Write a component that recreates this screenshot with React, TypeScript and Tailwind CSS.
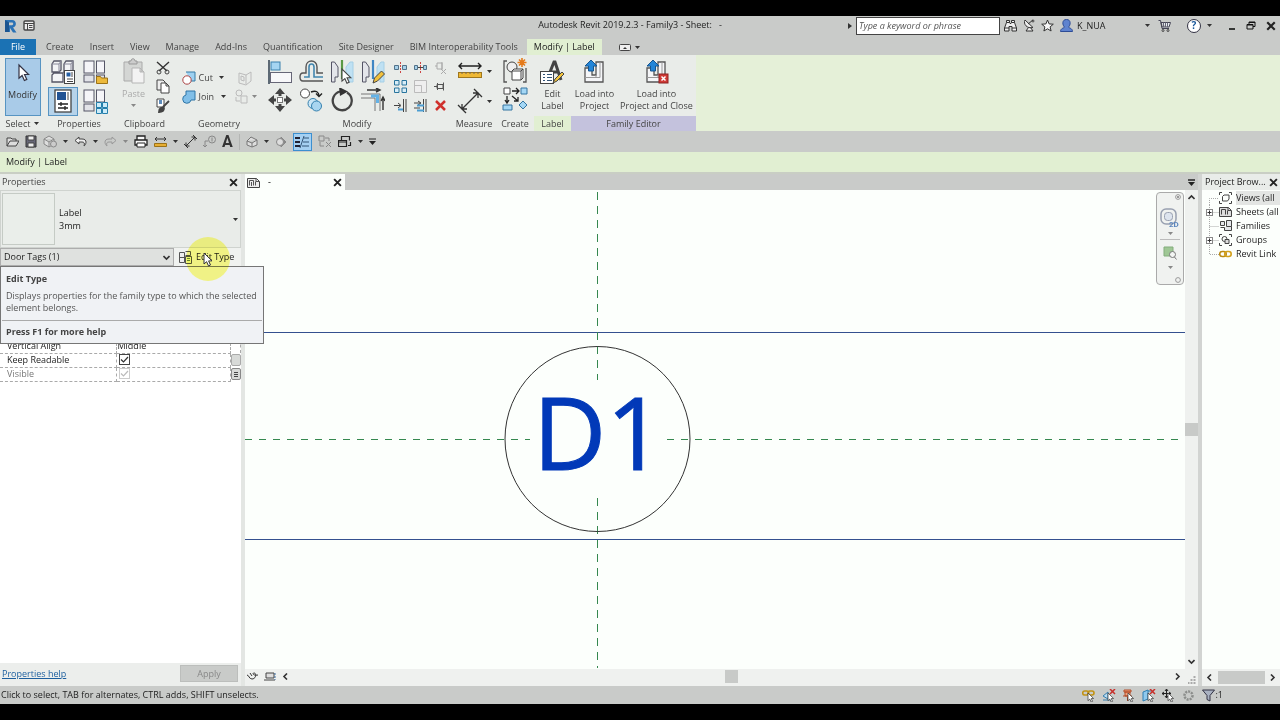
import React from 'react';

interface IconProps {
  w: number;
  h: number;
  children: React.ReactNode;
}

const Icon = ({ w, h, children }: IconProps) => (
  <svg width={w} height={h} viewBox={`0 0 ${w} ${h}`} fill="none" stroke="#444" strokeWidth={1} className="shrink-0" aria-hidden="true">
    {children}
  </svg>
);

const Caret = ({ muted }: { muted?: boolean }) => (
  <svg width={5} height={3} viewBox="0 0 5 3" className="shrink-0" aria-hidden="true">
    <path d="M0 0h5L2.5 3z" fill={muted ? '#888' : '#333'} />
  </svg>
);

/* Arrow pointer, reused by several icons */
const POINTER = 'M0 0v11l2.6-2.3 1.9 4.2 2-.9-1.9-4.1H8z';

const XMark = ({ size = 8 }: { size?: number }) => (
  <svg width={size} height={size} viewBox="0 0 8 8" aria-hidden="true">
    <path d="M1 1l6 6M7 1L1 7" stroke="#222" strokeWidth={1.7} />
  </svg>
);

const Chevron = ({ d }: { d: string }) => (
  <svg width={7} height={7} viewBox="0 0 7 7" fill="none" stroke="#333" strokeWidth={1.6} aria-hidden="true">
    <path d={d} />
  </svg>
);

const LEFT = 'M5 .5L2 3.500l3 3';
const RIGHT = 'M2 .5l3 3-3 3';
const UP = 'M.5 5l3-3 3 3';
const DOWN = 'M.5 2l3 3 3-3';

const IconButton = ({ label, className = '', children }: { label: string; className?: string; children: React.ReactNode }) => (
  <button type="button" aria-label={label} className={`flex items-center justify-center ${className}`}>
    {children}
  </button>
);

/* ---------- Title bar ---------- */

const TitleBar = () => (
  <header className="grid h-[23px] shrink-0 grid-cols-[1fr_auto_1fr] items-center bg-[#c9cbc9]">
    <div className="flex items-center gap-1.5 pb-1 pl-1">
      <Icon w={13} h={14}>
        <path d="M1 1h7c5 0 5 7 1 7.500l3.500 5H9L6 9v4H1z" fill="#2b72b5" stroke="none" />
        <path d="M5 3.500h3c1.600 0 1.600 2.700 0 2.700H5z" fill="#c9cbc9" stroke="none" />
        <path d="M1 1l4 2.500V13H1z" fill="#1a5490" stroke="none" />
      </Icon>
      <IconButton label="Home">
        <Icon w={12} h={11}>
          <rect x={1} y={1} width={10} height={9} rx={1} fill="#eee" strokeWidth={1.400} />
          <path d="M1 3.500h10M4.500 3.500v6.500M6 5.500h3.500M6 7.500h3.500" />
        </Icon>
      </IconButton>
    </div>
    <h1 className="whitespace-pre pb-1.5 pr-5 text-[9px] leading-4 text-[#222]">Autodesk Revit 2019.2.3 - Family3 - Sheet:   -</h1>
    <div className="flex items-center justify-end pb-1 pr-1">
      <svg width={4} height={6} viewBox="0 0 4 6" className="mr-1" aria-hidden="true"><path d="M0 0l4 3-4 3z" fill="#333" /></svg>
      <input
        type="text"
        aria-label="Search"
        placeholder="Type a keyword or phrase"
        className="mr-1 h-[18px] w-36 border border-[#444] bg-white px-0.5 text-[9px] italic placeholder:text-[#555]"
      />
      <div className="flex items-center gap-1.5">
        <IconButton label="Find">
          <Icon w={13} h={13}>
            <path d="M2.500 3.500V1.500h3v2l.5 1h1l.5-1v-2h3v2l2 5.500v3h-4.500V7.500h-3V12H.5V9z" fill="#eee" stroke="#333" />
            <path d="M.5 9H5M8 9h4.500M2.500 3.500h3M7.500 3.500h3" stroke="#333" />
          </Icon>
        </IconButton>
        <IconButton label="Communication Center">
          <Icon w={12} h={13}>
            <path d="M2 1c-2 4 2 9 8 7.500zM5 5l5-4M5.500 8.500L3 12h7l-2.500-3.500" fill="#eee" stroke="#333" />
            <circle cx={10} cy={2} r={1} />
          </Icon>
        </IconButton>
        <IconButton label="Favorites">
          <Icon w={13} h={13}>
            <path d="M6.500 1l1.600 3.900 4.200.3-3.200 2.700 1 4.100-3.600-2.200L2.900 12l1-4.100L.7 5.200l4.200-.3z" fill="#f6f6f6" stroke="#333" />
          </Icon>
        </IconButton>
        <IconButton label="Account">
          <Icon w={13} h={13}>
            <path d="M6.500.5c5 0 4 6 2 7.500 0 1 4 1 4 4.500H.5C.5 9 4.500 9 4.500 8c-2-1.500-3-7.500 2-7.500z" fill="#5f83cf" stroke="#2d4c96" />
          </Icon>
        </IconButton>
      </div>
      <span className="ml-1 w-[68px] text-[9px] text-[#222]">K_NUA</span>
      <Caret />
      <IconButton label="App Store" className="ml-2 mr-4">
        <Icon w={13} h={13}>
          <path d="M.5 1.500h2l1.500 8h7M3 3.500h9.500L11 8H4z" fill="#e8ecf2" stroke="#445" />
          <path d="M5.500 3.500V8M7.500 3.500V8M9.500 3.500V8" stroke="#667" />
          <circle cx={5} cy={11.500} r={1} /><circle cx={10} cy={11.500} r={1} />
        </Icon>
      </IconButton>
      <IconButton label="Help" className="mr-1.5 h-[14px] w-[14px] rounded-full border border-[#334] bg-white text-[10px] font-bold text-[#1c5a9c]">?</IconButton>
      <Caret />
      <div className="ml-4 flex items-center gap-2.5">
        <IconButton label="Minimize"><Icon w={8} h={8}><path d="M1 7h6" stroke="#111" strokeWidth={1.600} /></Icon></IconButton>
        <IconButton label="Restore"><Icon w={10} h={9}><path d="M3 3V1h6v4.500H7M1 3.500h6V8H1zM1 4h6M3 1.500h6" stroke="#111" /></Icon></IconButton>
        <IconButton label="Close"><XMark size={10} /></IconButton>
      </div>
    </div>
  </header>
);

/* ---------- Ribbon ---------- */

const TABS = ['Create', 'Insert', 'View', 'Manage', 'Add-Ins', 'Quantification', 'Site Designer', 'BIM Interoperability Tools'];

const RibbonTabs = () => (
  <nav className="flex h-4 shrink-0 items-stretch bg-[#c9cbc9] text-[9px] leading-4 text-[#444]">
    <button type="button" className="w-9 bg-[#1b72b4] text-white">File</button>
    <div className="flex gap-4 pl-[10px] pr-[9px]">
      {TABS.map((tab) => (
        <button key={tab} type="button" className="whitespace-nowrap">{tab}</button>
      ))}
    </div>
    <button type="button" className="w-[75px] whitespace-nowrap bg-[#e1efd2] text-[#222]">Modify | Label</button>
    <button type="button" aria-label="Minimize ribbon" className="ml-[17px] flex items-center gap-1">
      <Icon w={12} h={7}>
        <rect x={0.5} y={0.5} width={11} height={6} rx={1} fill="#eee" />
        <path d="M4 5l2-2 2 2z" fill="#333" stroke="none" />
      </Icon>
      <Caret />
    </button>
  </nav>
);

interface PanelProps {
  title: React.ReactNode;
  className: string;
  titleClass?: string;
  children: React.ReactNode;
}

const Panel = ({ title, className, titleClass = '', children }: PanelProps) => (
  <section className={`flex shrink-0 flex-col ${className}`}>
    <div className="flex h-[61px] justify-center pt-[3px]">{children}</div>
    <h2 className={`flex h-[15px] items-center justify-center gap-1 whitespace-nowrap ${titleClass}`}>{title}</h2>
  </section>
);

const TypeBoxes = () => (
  <>
    <rect x={1} y={1} width={10} height={12} fill="#f5f5f8" stroke="#556" />
    <rect x={13.500} y={1} width={8} height={12} fill="#f5f5f8" stroke="#556" />
    <rect x={1} y={15} width={10} height={7} fill="#e2e3e8" stroke="#556" />
    <rect x={13.500} y={15} width={8} height={7} fill="#e2e3e8" stroke="#556" />
  </>
);

const LoadIcon = ({ close }: { close?: boolean }) => (
  <Icon w={25} h={24}>
    <path d="M3 8h7v7h4V2h7v20H3z" fill="#f5f6f8" stroke="#555" strokeWidth={1.300} />
    <path d="M3 17.500h11V15M14 17.500h4V2" stroke="#999" />
    <path d="M9 0l6 6h-3.500v5h-5V6H3z" fill="#2285d8" stroke="#17558e" />
    {close && (
      <>
        <rect x={15} y={14} width={9} height={9} fill="#d03a36" stroke="#8d2020" />
        <path d="M17.500 16.500l4 4M21.500 16.500l-4 4" stroke="#fff" strokeWidth={1.500} />
      </>
    )}
  </Icon>
);

const MODIFY_TOOLS: [string, React.ReactNode][] = [
  ['Align', <><path d="M1 0v24" stroke="#234" strokeWidth={1.400} /><rect x={3} y={2} width={9} height={8} fill="#a5d5f2" stroke="#3b80ad" /><rect x={2.500} y={12.500} width={21} height={10} fill="#f7f7f9" stroke="#667" /></>],
  ['Offset', <><path d="M24 13h-6V7c0-8-11-8-11 0v6H4c-4 0-4 8 0 8h20" stroke="#555" strokeWidth={1.400} /><path d="M24 17h-9V7c0-4-5-4-5 0v10H5" stroke="#4286ae" strokeWidth={1.600} /></>],
  ['Mirror - Pick Axis', <><path d="M1.500 2h3l3.500 5v10H5v5H1.500z" fill="#e3e5ea" stroke="#556" /><path d="M12 0v19" stroke="#5a9a45" strokeWidth={2.200} /><path d="M23 2h-3l-4 5v10h3v5h4z" fill="#bfe1f3" stroke="#a5cfe6" /><path d={POINTER} transform="translate(12 9) scale(1.100)" fill="#fff" stroke="#444" /></>],
  ['Mirror - Draw Axis', <><path d="M1.500 2h3l3.500 5v10H5v5H1.500z" fill="#e3e5ea" stroke="#556" /><path d="M12 0v19" stroke="#3f86c4" strokeWidth={2.200} /><path d="M23 2h-3l-4 5v10h3v5h4z" fill="#bfe1f3" stroke="#a5cfe6" /><path d="M12 23l1.500-5 7-7 3 3-7 7z" fill="#f1c13c" stroke="#444" /></>],
  ['Move', <><path d="M12 4v16M4 12h16" stroke="#444" strokeWidth={3} /><path d="M12 0l5 6H7zM12 24l5-6H7zM0 12l6-5v10zM24 12l-6-5v10z" fill="#444" stroke="none" /><rect x={8.500} y={8.500} width={7} height={7} fill="#eee" stroke="#e9ece9" strokeWidth={1} /><rect x={9.500} y={9.500} width={5} height={5} fill="#fff" stroke="#777" /></>],
  ['Copy', <><circle cx={6} cy={5.500} r={4.500} fill="#fff" /><path d="M12 4c5-2 8 0 8 4M17 5.500l3 3 3-3" stroke="#222" strokeWidth={1.400} /><circle cx={14} cy={15.500} r={5} fill="#cbe6f6" stroke="#3581af" /><circle cx={17.500} cy={18} r={5} fill="#a9d5f0" stroke="#3581af" /></>],
  ['Rotate', <><path d="M10 3.500a9.500 9.500 0 1 0 7 1" stroke="#444" strokeWidth={2.300} /><path d="M9-1l9 4.500-8 4.500z" fill="#333" stroke="none" /></>],
  ['Trim/Extend to Corner', <><path d="M6 2h12M15 0l4 2-4 2M22 22v-11M20 13l2-4 2 4" stroke="#333" strokeWidth={1.400} /><path d="M0 6h19v17M0 10h14v13" stroke="#777" /><path d="M10 8h6.500v7" stroke="#64b2e6" strokeWidth={3} /></>],
];

const SMALL_TOOLS: [string, React.ReactNode][] = [
  ['Split Element', <><path d="M.5 4.500h4v4h-4zM8.500 4.500h4v4h-4z" fill="#a7d1ea" stroke="#52738a" /><path d="M6.500 1v11" stroke="#c44" strokeDasharray="2 1" /></>],
  ['Split with Gap', <><path d="M.5 4.500h3v4h-3zM9.500 4.500h3v4h-3z" fill="#a7d1ea" stroke="#52738a" /><path d="M6.500 1v11" stroke="#c44" strokeDasharray="2 1" /><path d="M4 6.500h5" /></>],
  ['Unpin', <><path d="M3 2h5v6H3zM1 5h2M8 1v8M7 8l5 5M12 8l-5 5" stroke="#aaa" /></>],
  ['Array', <><path d="M.5.5h4.500v4.500H.5zM8 .5h4.500v4.500H8zM.5 8h4.500v4.500H.5zM8 8h4.500v4.500H8z" fill="#d8edf7" stroke="#28749d" /></>],
  ['Scale', <><path d="M.5.5h12v12H.5zM.5 5.500h7v7" fill="#eee" stroke="#bbb" /></>],
  ['Pin', <><path d="M3 4.500h6v4H3zM0 6.500h3M9.500 2.500v8M3.500 3v7" stroke="#555" /></>],
  ['Trim Single', <><path d="M0 6.500h6M4 4l3 2.500L4 9M9.500 0v13M12 0v13" stroke="#444" /><path d="M4 10.500h5" stroke="#4b9dd2" strokeWidth={2} /></>],
  ['Trim Multiple', <><path d="M0 4h6M4 2l3 2-3 2M0 9h6M9.500 0v13M12 0v13" stroke="#444" /><path d="M3 6.500h7M3 11.500h7" stroke="#4b9dd2" strokeWidth={2} /></>],
  ['Delete', <><path d="M2 2l9 9M11 2l-9 9" stroke="#d0312d" strokeWidth={2.500} /></>],
];

const Ribbon = () => (
  <div className="flex h-[76px] shrink-0 bg-[#e5f0d8] text-[9px] text-[#444]">
    <div className="flex bg-[#e9ece9]">
      <Panel title={<>Select <Caret /></>} className="w-[45px]">
        <button type="button" className="flex h-[58px] w-9 flex-col items-center border border-[#5794c2] bg-[#a9cbe8] pt-1">
          <Icon w={14} h={20}><path d={POINTER} transform="translate(3 2) scale(1.200)" fill="#fff" stroke="#334" /></Icon>
          <span className="leading-6 text-[#333]">Modify</span>
        </button>
      </Panel>

      <Panel title="Properties" className="w-[68px]">
        <div className="grid grid-cols-2 gap-x-0.5">
          <IconButton label="Family Category" className="h-7 w-[30px]">
            <Icon w={25} h={25}>
              <path d="M1 4l2-3h7v9l-2 2H1zM13 4l2-3h7v9l-2 2h-7zM1 15l2-2h9v9H1z" fill="#f3f4f6" stroke="#556" strokeWidth={1.300} />
              <path d="M1 4h7v8M8 4l2-3M13 4h7v8M20 4l2-3" stroke="#889" />
              <rect x={13.500} y={10.500} width={10} height={13} fill="#fff" />
              <rect x={15.500} y={12.500} width={4} height={4} fill="#255ea3" stroke="none" />
              <path d="M16 19h6M16 21.500h6M21 12v5" />
            </Icon>
          </IconButton>
          <IconButton label="Family Types" className="h-7 w-[30px]">
            <Icon w={25} h={25}><TypeBoxes /><path d="M13.500 16.500h4l1 1.500h6v5.500h-11z" fill="#ecb93b" stroke="#9c7317" /></Icon>
          </IconButton>
          <IconButton label="Properties" className="h-[29px] w-[30px] border border-[#5794c2] bg-[#b6d3ea]">
            <Icon w={18} h={24}>
              <rect x={1} y={1} width={16} height={22} fill="#fff" strokeWidth={1.300} />
              <rect x={3} y={3} width={9} height={8} fill="#215293" stroke="none" /><path d="M14 3v8" />
              <path d="M4 15h10M4 19h10M7 13v4M11 17v4" stroke="#222" strokeWidth={1.300} />
            </Icon>
          </IconButton>
          <IconButton label="Type Properties" className="h-[29px] w-[30px]">
            <Icon w={25} h={25}>
              <TypeBoxes />
              <path d="M13.500 13.500h5v5h-5zM19.500 13.500h5v5h-5zM13.500 19.500h5v5h-5zM19.500 19.500h5v5h-5z" fill="#ccebf8" stroke="#247fac" />
            </Icon>
          </IconButton>
        </div>
      </Panel>

      <Panel title="Clipboard" className="w-[63px]">
        <div className="flex gap-2">
          <button type="button" className="flex w-7 flex-col items-center text-[#aaa]">
            <Icon w={22} h={26}>
              <path d="M1 4h18v19H1z" fill="#d4d6d4" stroke="#aaa" /><path d="M6 6V3h2c0-3 4-3 4 0h2v3z" fill="#ccc" stroke="#999" />
              <path d="M9 10h8l4 4v11H9zM17 10v4h4" fill="#f3f3f3" stroke="#b5b5b5" />
            </Icon>
            <span className="leading-5">Paste</span>
            <Caret muted />
          </button>
          <div className="flex flex-col gap-1 pt-0.5">
            <IconButton label="Cut to Clipboard"><Icon w={14} h={15}><path d="M1 2l10 9M13 2L3 11" stroke="#333" strokeWidth={1.400} /><circle cx={3} cy={12} r={2} /><circle cx={11} cy={12} r={2} /></Icon></IconButton>
            <IconButton label="Copy to Clipboard"><Icon w={14} h={15}><path d="M1 1h6l2 2v8H1z" fill="#eee" /><path d="M5 4h5l3 3v7H5zM10 4v3h3" fill="#fff" /></Icon></IconButton>
            <IconButton label="Match Type"><Icon w={14} h={15}><path d="M1 1h7v8H1z" fill="#fff" /><path d="M3 3h3M3 5h3" stroke="#2866a4" strokeWidth={1.500} /><path d="M13 3L7 9M3 14c0-4 3-5 5-4 0 3-2 4-5 4z" fill="#444" strokeWidth={1.800} /></Icon></IconButton>
          </div>
        </div>
      </Panel>

      <Panel title="Geometry" className="w-[86px]">
        <div className="grid grid-cols-[37px_15px_auto] content-center items-center gap-y-[3px]">
          <button type="button" className="flex items-center gap-[3px]">
            <Icon w={14} h={16}><path d="M4 2h9v9h-4" fill="#9dd0f0" stroke="#367ba5" /><circle cx={5} cy={10} r={4.200} fill="#fff" stroke="#a44" /></Icon>Cut
          </button>
          <span className="flex"><Caret /></span>
          <IconButton label="Wall Opening"><Icon w={14} h={16}><path d="M1 3l7 2 5-3v9l-5 4-7-2zM8 5v9M3 6l3 1v4l-3-1z" stroke="#bbb" /></Icon></IconButton>
          <button type="button" className="flex items-center gap-[3px]">
            <Icon w={14} h={16}><path d="M4 2h9v9H9a4.200 4.200 0 1 1-5-5z" fill="#81bfe8" stroke="#2f75a6" /></Icon>Join
          </button>
          <span className="flex pl-0.5"><Caret /></span>
          <span className="flex items-center gap-1">
            <Icon w={14} h={16}><circle cx={5} cy={4} r={3} stroke="#bbb" /><path d="M7 7h6v7H7zM2 8v4h4" stroke="#bbb" /></Icon><Caret muted />
          </span>
        </div>
      </Panel>

      <Panel title="Modify" className="w-[190px]">
        <div className="flex items-start gap-[9px]">
          <div className="grid grid-cols-4 gap-x-[7px] gap-y-1 pt-0.5">
            {MODIFY_TOOLS.map(([name, drawing]) => (
              <IconButton key={name} label={name}><Icon w={24} h={24}>{drawing}</Icon></IconButton>
            ))}
          </div>
          <div className="grid grid-cols-3 gap-x-[7px] gap-y-1.5 pt-[3px]">
            {SMALL_TOOLS.map(([name, drawing]) => (
              <IconButton key={name} label={name}><Icon w={13} h={13}>{drawing}</Icon></IconButton>
            ))}
          </div>
        </div>
      </Panel>

      <Panel title="Measure" className="w-[44px]">
        <div className="grid grid-cols-[27px_5px] content-start items-center gap-x-1 gap-y-1">
          <IconButton label="Measure"><Icon w={26} h={26}><path d="M2 8h22M5 5L2 8l3 3M21 5l3 3-3 3" stroke="#222" strokeWidth={1.400} /><rect x={1.500} y={14.500} width={23} height={5} fill="#efb834" stroke="#9f771d" /><path d="M5 14v2M9 14v2M13 14v2M17 14v2M21 14v2" stroke="#765" /></Icon></IconButton>
          <Caret />
          <IconButton label="Dimension"><Icon w={26} h={26}><path d="M5 21L21 5M16 5h5v5M10 21H5v-5M1 17l8 8M17 1l8 8" stroke="#333" strokeWidth={1.300} /></Icon></IconButton>
          <Caret />
        </div>
      </Panel>

      <Panel title="Create" className="w-[38px]">
        <div className="flex flex-col gap-0.5">
          <IconButton label="Create Group">
            <Icon w={26} h={26}>
              <path d="M5 3H2v21h3M21 24h3V10" stroke="#555" strokeWidth={1.300} /><circle cx={10} cy={9} r={5} fill="#eee" />
              <path d="M10 13l2-2h9v9l-2 2h-9zM10 13h9v9M19 13l2-2" fill="#fff" />
              <path d="M20 0v9M15.500 4.500h9M17 1.500l6 6M23 1.500l-6 6" stroke="#e57b1c" strokeWidth={1.600} />
            </Icon>
          </IconButton>
          <IconButton label="Create Similar">
            <Icon w={26} h={26}>
              <path d="M2 2h6v6H2z" fill="#fff" /><path d="M19 2h6v6h-6zM1 19h9v5H1z" fill="#a4d7f5" stroke="#3475a1" /><path d="M21 15l4 4-4 4-4-4z" fill="#a4d7f5" stroke="#3475a1" />
              <path d="M10 5h7M14 2l3 3-3 3M5 10v7M3 14l2 3 2-3M10 10l6 5M16 11v4h-4" stroke="#222" strokeWidth={1.300} />
            </Icon>
          </IconButton>
        </div>
      </Panel>

      <Panel title="Label" className="w-[37px]" titleClass="bg-[#e1efd2]">
        <button type="button" className="flex flex-col items-center pt-0.5 leading-3">
          <Icon w={25} h={25}>
            <path d="M8 17L14 2h1l6 18M12 12h6" stroke="#444" strokeWidth={3} /><rect x={0.500} y={11.500} width={13} height={12} fill="#fff" />
            <path d="M3 14.500h2M7 14.500h5M3 17.500h2M7 17.500h5M3 20.500h2M7 20.500h5" stroke="#357" /><path d="M13 23l2-4 7-7 2 2-7 7z" fill="#f2c43c" />
          </Icon>
          <span className="mt-[3px]">Edit<br />Label</span>
        </button>
      </Panel>

      <Panel title="Family Editor" className="w-[125px]" titleClass="bg-[#c4c2dd]">
        <div className="flex pt-0.5 leading-3">
          <button type="button" className="flex w-[46px] flex-col items-center"><LoadIcon /><span className="mt-1 whitespace-nowrap">Load into<br />Project</span></button>
          <button type="button" className="flex w-[78px] flex-col items-center"><LoadIcon close /><span className="mt-1 whitespace-nowrap">Load into<br />Project and Close</span></button>
        </div>
      </Panel>
    </div>
  </div>
);

/* ---------- Quick access toolbar ---------- */

const QuickAccess = () => (
  <div className="flex h-[21px] shrink-0 items-center gap-1.5 bg-[#c9cbc9] pl-1.5">
    <IconButton label="Open"><Icon w={13} h={13}><path d="M1 11V3h4l1 1h4v2M1 11l3-5h9l-3 5z" fill="#ddd" /></Icon></IconButton>
    <IconButton label="Save"><Icon w={12} h={13}><path d="M1 1h10v11H1z" fill="#667" stroke="#333" /><path d="M3 1h6v4H3zM3 8h6v4H3z" fill="#eee" /></Icon></IconButton>
    <IconButton label="Synchronize"><Icon w={14} h={13}><path d="M1 4l5-3 5 3v5l-5 3-5-3zM1 4l5 3 5-3M6 7v5" fill="#ddd" stroke="#888" /><circle cx={10.500} cy={9} r={3} fill="#ccc" stroke="#888" /></Icon></IconButton>
    <Caret />
    <IconButton label="Undo"><Icon w={13} h={11}><path d="M1 4.500L5 1v2h3c6 0 4 6 2 7 1-3 0-4-2-4H5v2z" fill="#eee" /></Icon></IconButton>
    <Caret />
    <IconButton label="Redo"><Icon w={13} h={11}><path d="M12 4.500L8 1v2H5c-6 0-4 6-2 7-1-3 0-4 2-4h3v2z" stroke="#999" /></Icon></IconButton>
    <Caret muted />
    <IconButton label="Print"><Icon w={14} h={13}><path d="M3 5V1h8v4M1 5h12v5H1z" fill="#f7f7f7" stroke="#222" strokeWidth={1.300} /><path d="M3 8h8v4H3z" fill="#fff" stroke="#222" /></Icon></IconButton>
    <IconButton label="Measure"><Icon w={13} h={12}><path d="M1 3h11M3 1L1 3l2 2M10 1l2 2-2 2" stroke="#333" /><path d="M.5 7.500h12v3H.5z" fill="#e7ae32" stroke="#9b7217" /></Icon></IconButton>
    <Caret />
    <IconButton label="Aligned Dimension"><Icon w={13} h={13}><path d="M2 11l9-9M7.500 2H11v3.500M5.500 11H2V7.500M0 9l4 4M9 0l4 4" stroke="#333" /></Icon></IconButton>
    <IconButton label="Tag"><Icon w={13} h={13}><circle cx={9} cy={4.500} r={3.500} stroke="#888" /><path d="M9 2.500v4M5 6H2v6M0 10l2 2 2-2" stroke="#888" /></Icon></IconButton>
    <button type="button" aria-label="Text" className="font-[Roboto] text-base font-bold leading-4 text-[#333]">A</button>
    <span className="h-4 w-px bg-[#b4b6b4]" />
    <IconButton label="3D View"><Icon w={12} h={12}><path d="M1 5l4-4 6 3v5l-5 2-5-2zM1 5l5 2 5-3M6 7v4" fill="#ddd" stroke="#777" /></Icon></IconButton>
    <Caret />
    <IconButton label="Section"><Icon w={12} h={12}><path d="M6 1l5 5-5 5z" fill="#888" stroke="#888" /><circle cx={5} cy={6} r={3.500} fill="#ddd" stroke="#888" /></Icon></IconButton>
    <IconButton label="Thin Lines" className="h-[18px] w-[19px] border border-[#3c8fd0] bg-[#a5d0f2]"><Icon w={14} h={12}><path d="M0 2h5M0 6h5M0 10h5" stroke="#223" strokeWidth={2} /><path d="M9 2h5M8 6h6M7 10h7M9 0L5 12" stroke="#357" /></Icon></IconButton>
    <IconButton label="Close Hidden Windows"><Icon w={14} h={13}><path d="M1 1h5v5H1zM7 3h4v3M2 7v4h4M8 7l5 5M13 7l-5 5" stroke="#888" /></Icon></IconButton>
    <IconButton label="Switch Windows"><Icon w={14} h={12}><path d="M3.500 4V.5h8v4M.5 4.500h8v6h-8zM.5 6h8M10 9.500h2.500V6" stroke="#222" strokeWidth={1.200} /></Icon></IconButton>
    <Caret />
    <IconButton label="Customize Toolbar"><Icon w={7} h={7}><path d="M0 1h7" stroke="#222" /><path d="M0 3h7L3.500 7z" fill="#222" stroke="none" /></Icon></IconButton>
  </div>
);

/* ---------- Properties palette ---------- */

const Tooltip = () => (
  <div role="tooltip" className="absolute left-0 top-[92px] z-10 h-[78px] w-[264px] whitespace-nowrap border border-[#767676] bg-[#f0f2f5] text-[9px] leading-3 text-[#555]">
    <h3 className="px-[5px] pt-1.5 font-bold text-[#444]">Edit Type</h3>
    <p className="px-[5px] pt-[5px]">Displays properties for the family type to which the selected<br />element belongs.</p>
    <p className="mx-px mt-1.5 border-t border-[#aaa] px-1 pt-[5px] font-bold text-[#444]">Press F1 for more help</p>
  </div>
);

const cellLine = 'border-b border-r border-dashed border-[#aaa]';

const PropertiesPalette = () => (
  <aside className="relative flex w-[245px] shrink-0 flex-col border-r-4 border-[#e3e6e3] bg-white text-[9px] text-[#222]">
    <div className="flex h-4 shrink-0 items-center justify-between bg-[#e9ece9] pl-0.5 pr-[3px] text-[#444]">
      <h2>Properties</h2>
      <IconButton label="Close Properties"><XMark size={9} /></IconButton>
    </div>
    <button type="button" aria-label="Type selector: Label 3mm" className="flex h-[58px] shrink-0 items-center border border-[#cfd3cf] bg-[#e9ece9] pl-px pr-0.5 text-left leading-[13px]">
      <span className="mr-1 h-[52px] w-[53px] border border-[#c5cbc5] bg-[#eaeeea]" />
      <span className="flex-1">Label<br />3mm</span>
      <Caret />
    </button>
    <div className="flex h-[18px] shrink-0 items-center bg-[#f0f2f0]">
      <div className="relative flex h-full w-[174px] items-center">
        <select aria-label="Filter" className="h-full w-full appearance-none border border-[#adadad] bg-[#dfe1df] pl-[3px] text-[9px]">
          <option>Door Tags (1)</option>
        </select>
        <span className="pointer-events-none absolute right-1"><Chevron d={DOWN} /></span>
      </div>
      <button type="button" className="flex items-center gap-1 whitespace-nowrap pl-[5px]">
        <Icon w={13} h={13}>
          <path d="M.5 1.500h5v10h-5zM.5 6.500h5M6.500.5h5v4h-5" fill="#eee" stroke="#555" />
          <path d="M6.500 5.500h6v7h-6z" fill="#eef4c0" stroke="#555" /><path d="M8 7.500h3M8 9.500h3" stroke="#684" />
        </Icon>
        Edit Type
      </button>
    </div>
    <div className="flex-1 pt-[73px]">
      <table className="w-full table-fixed border-collapse leading-3">
        <colgroup><col className="w-[116px]" /><col /><col className="w-[10px]" /></colgroup>
        <tbody>
          <tr className="h-[14px]">
            <th className={`${cellLine} pl-[7px] text-left font-normal`}>Vertical Align</th>
            <td className={`${cellLine} pl-px`}>Middle</td>
            <td className="border-r border-dashed border-[#aaa]" />
          </tr>
          <tr className="h-[14px]">
            <th className={`${cellLine} pl-[7px] text-left font-normal`}><label htmlFor="keep">Keep Readable</label></th>
            <td className={`${cellLine} pl-0.5`}>
              <span className="relative flex h-3">
                <input id="keep" type="checkbox" defaultChecked className="h-[11px] w-[11px] appearance-none border border-[#444] bg-white" />
                <svg width={11} height={11} viewBox="0 0 11 11" className="pointer-events-none absolute left-0 top-0" aria-hidden="true"><path d="M2 5.500L4.500 8 9 3" fill="none" stroke="#333" strokeWidth={1.200} /></svg>
              </span>
            </td>
            <td className="p-0"><span className="block h-3 rounded-xs border border-[#aaa] bg-[#d8dad8]" /></td>
          </tr>
          <tr className="h-[14px]">
            <th className={`${cellLine} pl-[7px] text-left font-normal text-[#777]`}><label htmlFor="visible">Visible</label></th>
            <td className={`${cellLine} pl-0.5`}>
              <span className="relative flex h-3">
                <input id="visible" type="checkbox" defaultChecked disabled className="h-[11px] w-[11px] appearance-none border border-[#ccc] bg-white" />
                <svg width={11} height={11} viewBox="0 0 11 11" className="pointer-events-none absolute left-0 top-0" aria-hidden="true"><path d="M2 5.500L4.500 8 9 3" fill="none" stroke="#bbb" strokeWidth={1.200} /></svg>
              </span>
            </td>
            <td className="p-0">
              <span className="flex h-3 flex-col items-center justify-center gap-px rounded-xs border border-[#888] bg-[#d8dad8]">
                <span className="h-px w-1 bg-[#444]" /><span className="h-px w-1 bg-[#444]" /><span className="h-px w-1 bg-[#444]" />
              </span>
            </td>
          </tr>
        </tbody>
      </table>
    </div>
    <div className="flex h-[23px] shrink-0 items-center justify-between bg-[#eceeec] pb-0.5 pl-0.5 pr-[3px]">
      <a href="#help" className="text-[#1d5f9f] underline">Properties help</a>
      <button type="button" disabled className="h-[17px] w-[58px] border border-[#bcbebc] bg-[#c9cbc9] text-[#888]">Apply</button>
    </div>

    <Tooltip />
    {/* click highlight and mouse pointer */}
    <div className="pointer-events-none absolute left-[186px] top-[63px] z-20 h-11 w-11 rounded-full bg-[#ffff8c] mix-blend-multiply" />
    <svg width={10} height={15} viewBox="0 0 10 15" className="pointer-events-none absolute left-[203px] top-[78px] z-30" aria-hidden="true">
      <path d={POINTER} transform="translate(1 1)" fill="#fff" stroke="#333" strokeWidth={1} />
    </svg>
  </aside>
);

/* ---------- Drawing area ---------- */

const Drawing = () => (
  <div className="relative min-h-0 min-w-0 flex-1 bg-[#fcfffc]">
    <svg className="absolute inset-0 h-full w-full" viewBox="0 0 940 479" preserveAspectRatio="xMidYMid slice" role="img" aria-label="Door tag D1">
      <g shapeRendering="crispEdges">
        <path d="M0 142.500h940M0 349.500h940" stroke="#34508f" />
        <path d="M0 249.500h285M422 249.500h518" stroke="#35884f" strokeDasharray="7 7" />
        <path d="M352.500 2v188M352.500 308v170" stroke="#35884f" strokeDasharray="8 6" />
      </g>
      <circle cx={352.500} cy={249} r={92.500} fill="none" stroke="#333" />
      <text x={288} y={280} fontSize={101} fill="#0239b8" stroke="#0239b8" strokeWidth={1} fontFamily="'Open Sans', sans-serif">D1</text>
    </svg>
    <div className="absolute right-px top-0.5 flex h-[93px] w-7 flex-col items-center rounded border border-[#aaa] bg-[#f0f2f0]">
      <span className="mr-0.5 mt-px self-end"><Icon w={6} h={6}><circle cx={3} cy={3} r={2.400} stroke="#999" /><path d="M2 2l2 2M4 2L2 4" stroke="#999" /></Icon></span>
      <IconButton label="Steering wheel" className="mt-2">
        <svg width={20} height={20} viewBox="0 0 20 20" fill="none" aria-hidden="true">
          <rect x={1} y={1} width={15} height={15} rx={5} stroke="#98a0b0" strokeWidth={1.500} />
          <rect x={4.500} y={4.500} width={8} height={8} rx={3} fill="#dde4ee" stroke="#98a0b0" />
          <text x={9} y={19} fontSize={8} fontWeight={700} fill="#5c86bd" fontFamily="Roboto, sans-serif">2D</text>
        </svg>
      </IconButton>
      <span className="my-1"><Caret muted /></span>
      <span className="h-px w-5 bg-[#bbb]" />
      <IconButton label="Zoom" className="mt-1.5">
        <Icon w={14} h={14}><path d="M1 1h9v9H1z" fill="#9fc795" stroke="#83ad7c" /><circle cx={9.500} cy={8.500} r={3} fill="#f3f5f3" stroke="#777" /><path d="M11.500 11l2 2.500" stroke="#777" /></Icon>
      </IconButton>
      <span className="my-1.5"><Caret muted /></span>
      <span className="mb-px mr-0.5 mt-auto self-end"><Icon w={6} h={6}><circle cx={3} cy={3} r={2.400} stroke="#999" /></Icon></span>
    </div>
  </div>
);

const SheetIcon = () => (
  <Icon w={13} h={11}><path d="M.5 1.500h9l3 3v6H.5z" fill="#eee" stroke="#444" /><path d="M2.500 8.500v-5h4v5M8.500 4.500v4M4.500 5v4M9 1.500v3h3" stroke="#555" /></Icon>
);

const ViewWindow = () => (
  <main className="flex min-w-0 flex-1 flex-col">
    <div className="flex h-4 shrink-0 items-center justify-between bg-[#c9cbc9] pr-[3px] text-[9px]">
      <div className="flex h-full w-[100px] items-center bg-[#fcfffc] pl-0.5 pr-[3px]">
        <SheetIcon />
        <span className="flex-1 pl-2">-</span>
        <IconButton label="Close view"><XMark size={9} /></IconButton>
      </div>
      <IconButton label="List views"><Icon w={7} h={7}><path d="M0 1h7" stroke="#222" strokeWidth={1.500} /><path d="M0 3h7L3.500 7z" fill="#222" stroke="none" /></Icon></IconButton>
    </div>
    <div className="flex min-h-0 flex-1">
      <Drawing />
      <div className="flex w-[13px] shrink-0 flex-col items-center justify-between bg-[#eff1ef] py-1">
        <Chevron d={UP} />
        <span className="h-[13px] w-[13px] bg-[#c8cac8]" />
        <Chevron d={DOWN} />
      </div>
    </div>
    <div className="flex h-[17px] shrink-0 items-center gap-[5px] bg-[#eff1ef] px-0.5 pb-0.5">
      <IconButton label="Reveal constraints"><Icon w={12} h={9}><path d="M0 3c2 0 2 4 5 4 4 0 5-6 2-6-2 0-1 3 4 2M3 1l2 3" stroke="#333" /></Icon></IconButton>
      <IconButton label="Preview visibility"><Icon w={13} h={9}><path d="M2 1h8v5H2zM0 8h11" fill="#ddd" stroke="#444" /><path d="M11 1v7" stroke="#47a" strokeDasharray="2 1" /></Icon></IconButton>
      <Chevron d={LEFT} />
      <div className="flex flex-1 justify-center"><span className="h-[13px] w-[13px] bg-[#c8cac8]" /></div>
      <Chevron d={RIGHT} />
      <span className="mt-1.5 flex w-[10px] justify-end"><Icon w={8} h={8}><path d="M6.500 0v2M3.500 3v2M6.500 3v2M.5 6v2M3.500 6v2M6.500 6v2" stroke="#aaa" strokeWidth={2} /></Icon></span>
    </div>
  </main>
);

/* ---------- Project browser ---------- */

const Brackets = () => <path d="M3 .5H.5V3M10 .5h2.500V3M.5 9v2.500H3M12.500 9v2.500H10" stroke="#444" />;

const TREE: { name: string; expandable?: boolean; icon: React.ReactNode }[] = [
  { name: 'Views (all', icon: <><Brackets /><path d="M3.500 4.500l1.500-1.500h5v4l-1.500 2h-5z" stroke="#444" /></> },
  { name: 'Sheets (all', expandable: true, icon: <><path d="M.5 1.500h9l3 3v6H.5z" fill="#ddd" /><path d="M2.500 8.500v-5h4v5M8.500 4.500v4M9 1.500v3h3" /></> },
  { name: 'Families', icon: <><path d="M1.500 1.500h4v4h-4zM7.500.5h5v6h-5zM1.500 7.500h4v3h7v-4" fill="#e5e7ea" /></> },
  { name: 'Groups', expandable: true, icon: <><Brackets /><circle cx={5.500} cy={5} r={2.500} /><path d="M6 5.500h4v4H6z" fill="#ddd" /></> },
  { name: 'Revit Link', icon: <><rect x={0.7} y={3.500} width={6.500} height={5} rx={2.500} stroke="#bb8a12" strokeWidth={1.600} /><rect x={5.700} y={3.500} width={6.500} height={5} rx={2.500} stroke="#d3a11d" strokeWidth={1.600} /></> },
];

const ProjectBrowser = () => (
  <aside className="flex w-[82px] shrink-0 flex-col overflow-hidden border-l-4 border-[#d2d4d2] bg-[#fcfffc] text-[9px] text-[#222]">
    <div className="flex h-4 shrink-0 items-center justify-between bg-[#e9ece9] pl-[3px] pr-0.5">
      <h2 className="whitespace-nowrap">Project Brow...</h2>
      <IconButton label="Close Project Browser"><XMark size={9} /></IconButton>
    </div>
    <ul className="flex-1 pt-px">
      {TREE.map((node, i) => (
        <li key={node.name} className="flex h-[14px] items-center whitespace-nowrap">
          <span className="flex w-[17px] shrink-0 items-center justify-end pl-1">
            <Icon w={13} h={14}>
              <path d={i === 0 ? 'M3.500 14V7.500H13' : i === 4 ? 'M3.500 0v7.500H13' : 'M3.500 0v14M3.500 7.500H13'} stroke="#aaa" strokeDasharray="1 1" />
              {node.expandable && <><rect x={0.5} y={4.500} width={6} height={6} fill="#fff" stroke="#888" /><path d="M1.500 7.500h4M3.500 5.500v4" stroke="#333" /></>}
            </Icon>
          </span>
          <Icon w={13} h={12}>{node.icon}</Icon>
          <span className={i === 0 ? 'ml-1 bg-[#e3e5e3] pr-2 leading-[14px]' : 'ml-1 leading-[14px]'}>{node.name}</span>
        </li>
      ))}
    </ul>
    <div className="flex h-[17px] shrink-0 items-center justify-between bg-[#eff1ef] px-1">
      <Chevron d={LEFT} />
      <span className="h-[13px] w-[47px] bg-[#c8cac8]" />
      <Chevron d={RIGHT} />
    </div>
  </aside>
);

/* ---------- Status bar ---------- */

const MiniPointer = () => <path d={POINTER} transform="translate(6 4) scale(.7)" fill="#fff" stroke="#333" />;

const STATUS_ICONS: [string, React.ReactNode][] = [
  ['Select links', <><rect x={0.7} y={2} width={6} height={4} rx={2} stroke="#c29213" strokeWidth={1.600} /><rect x={6} y={2} width={6} height={4} rx={2} stroke="#c29213" strokeWidth={1.600} /><MiniPointer /></>],
  ['Select underlay elements', <><path d="M1 7l5-4v7zM1 11h9" fill="#b7dcf3" stroke="#377ead" /><path d="M8 0l5 5M13 0L8 5" stroke="#c6302c" strokeWidth={1.500} /><MiniPointer /></>],
  ['Select pinned elements', <><path d="M2 1h7v2H2zM3 3h5v4H3zM1 7h9M5.500 8v4" fill="#f0a07c" stroke="#b34d28" /><MiniPointer /></>],
  ['Select elements by face', <><path d="M1 3l5-2v9l-5 2zM6 2h3" fill="#8fc9ee" stroke="#2e7fb3" /><path d="M8 0l5 5M13 0L8 5" stroke="#c6302c" strokeWidth={1.500} /><MiniPointer /></>],
  ['Drag elements on selection', <><path d="M4.500 0v9M0 4.500h9M3 2l1.500-2L6 2M3 7l1.500 2L6 7M2 3L0 4.500 2 6M7 3l2 1.500L7 6" stroke="#222" /><MiniPointer /></>],
  ['Background processes', <circle cx={6.500} cy={6.500} r={4} stroke="#8b8d8b" strokeWidth={2.500} strokeDasharray="2 1" />],
];

const StatusBar = () => (
  <footer className="flex h-[18px] shrink-0 items-center justify-between bg-[#c9cbc9] pl-px pr-[57px] text-[9px] text-[#222]">
    <p>Click to select, TAB for alternates, CTRL adds, SHIFT unselects.</p>
    <div className="flex items-center gap-1.5">
      {STATUS_ICONS.map(([name, drawing]) => (
        <IconButton key={name} label={name}><Icon w={14} h={13}>{drawing}</Icon></IconButton>
      ))}
      <button type="button" className="flex items-center">
        <Icon w={13} h={13}><path d="M.5 1h12L8 6.500V12L5 10.500v-4z" fill="#aab2c2" stroke="#334" /></Icon>:1
      </button>
    </div>
  </footer>
);

export default function App() {
  return (
    <div className="flex h-screen flex-col overflow-hidden bg-black py-4 font-['Open_Sans','Noto_Sans',sans-serif]">
      <TitleBar />
      <RibbonTabs />
      <Ribbon />
      <QuickAccess />
      <div className="flex h-[22px] shrink-0 items-center border-b-2 border-[#c9cec4] bg-[#e1efd2] pl-1.5 text-[9px] text-[#222]">Modify | Label</div>
      <div className="flex min-h-0 flex-1">
        <PropertiesPalette />
        <ViewWindow />
        <ProjectBrowser />
      </div>
      <StatusBar />
    </div>
  );
}
